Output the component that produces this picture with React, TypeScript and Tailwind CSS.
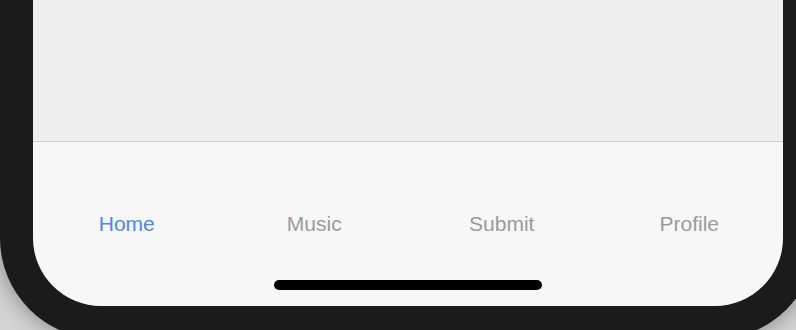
const tabs = [
  { label: "Home", active: true },
  { label: "Music", active: false },
  { label: "Submit", active: false },
  { label: "Profile", active: false },
]

export default function App() {
  return (
    <div className="w-[796px] h-[330px] overflow-hidden bg-[#d4d4d4]">
      {/* phone frame, its right and bottom edges run past the window */}
      <div className="w-[816px] h-[339px] border-[33px] border-t-0 border-[#1b1b1b] rounded-b-[101px] bg-[#1b1b1b] shadow-[0_0_24px_rgba(0,0,0,0.4)]">
        <div className="h-full flex flex-col rounded-b-[68px] overflow-hidden">
          <div className="h-[142px] bg-[#eeeeee] border-b border-[#cccccc] shrink-0" />
          <div
            className="flex-1 flex flex-col bg-[#f7f7f7]"
            style={{ fontFamily: '"Liberation Sans", Arial, sans-serif' }}
          >
            <div className="flex pt-[70px]">
              {tabs.map((tab) => (
                <div
                  key={tab.label}
                  className={`flex-1 text-center text-[21px] leading-[24px] ${
                    tab.active ? "text-[#4d87ee]" : "text-[#9a9a9a]"
                  }`}
                >
                  {tab.label}
                </div>
              ))}
            </div>
            <div className="mt-[44px] mx-auto w-[268px] h-[10px] rounded-full bg-black" />
          </div>
        </div>
      </div>
    </div>
  )
}
